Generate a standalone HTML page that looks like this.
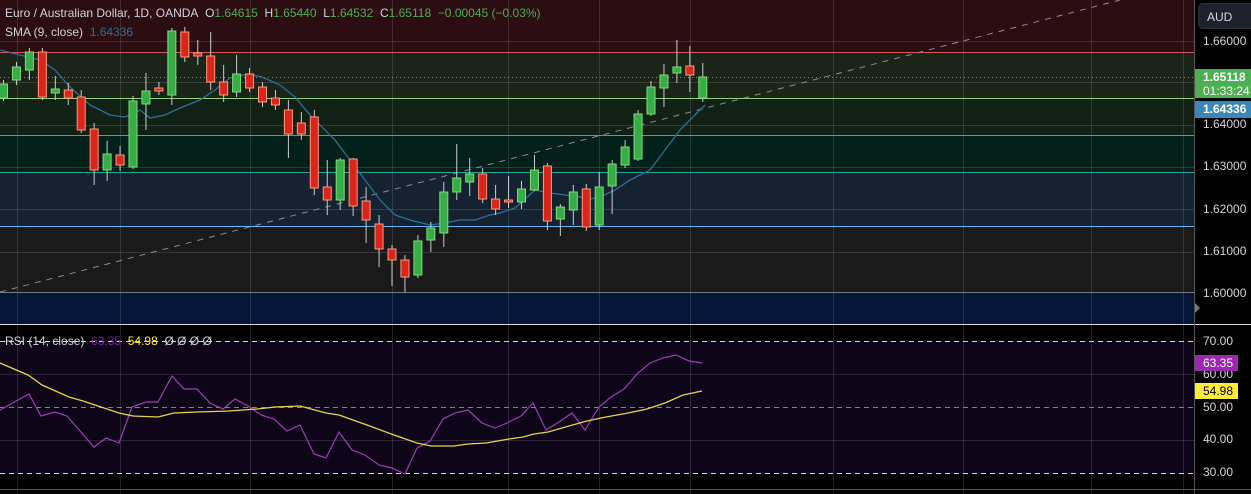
<!DOCTYPE html>
<html><head><meta charset="utf-8">
<style>
html,body{margin:0;padding:0;background:#000;}
body{width:1251px;height:494px;overflow:hidden;position:relative;font-family:"Liberation Sans",sans-serif;}
svg{position:absolute;left:0;top:0;}
.t{position:absolute;font-size:12px;color:#d1d4dc;white-space:nowrap;}
.ax{position:absolute;left:1203px;font-size:12px;color:#d1d4dc;}
.tag{position:absolute;left:1195px;width:56px;font-size:12px;font-weight:bold;padding-left:8px;box-sizing:border-box;}
</style></head><body>
<svg id="s" width="1251" height="494" xmlns="http://www.w3.org/2000/svg">
<rect x="0" y="0" width="1194" height="52" fill="#2c0e12"/>
<rect x="0" y="52" width="1194" height="46" fill="#1b2419"/>
<rect x="0" y="98" width="1194" height="37" fill="#122116"/>
<rect x="0" y="135" width="1194" height="37" fill="#03201a"/>
<rect x="0" y="172" width="1194" height="54" fill="#152331"/>
<rect x="0" y="226" width="1194" height="66" fill="#1a1a1a"/>
<rect x="0" y="292" width="1194" height="32" fill="#061638"/>
<rect x="0" y="341" width="1194" height="132" fill="#0f0519"/>
<g stroke="#ffffff" stroke-opacity="0.13" stroke-width="1">
<line x1="0" y1="41.5" x2="1194" y2="41.5"/><line x1="0" y1="82.5" x2="1194" y2="82.5"/>
<line x1="0" y1="125.5" x2="1194" y2="125.5"/><line x1="0" y1="167.5" x2="1194" y2="167.5"/>
<line x1="0" y1="209.5" x2="1194" y2="209.5"/><line x1="0" y1="252.5" x2="1194" y2="252.5"/>
<line x1="0" y1="374.5" x2="1194" y2="374.5"/><line x1="0" y1="440.5" x2="1194" y2="440.5"/>
<line x1="17.5" y1="0" x2="17.5" y2="494"/><line x1="120.5" y1="0" x2="120.5" y2="494"/>
<line x1="250.5" y1="0" x2="250.5" y2="494"/><line x1="392.5" y1="0" x2="392.5" y2="494"/>
<line x1="508.5" y1="0" x2="508.5" y2="494"/><line x1="599.5" y1="0" x2="599.5" y2="494"/>
<line x1="690.5" y1="0" x2="690.5" y2="494"/><line x1="833.5" y1="0" x2="833.5" y2="494"/>
<line x1="963.5" y1="0" x2="963.5" y2="494"/><line x1="1091.5" y1="0" x2="1091.5" y2="494"/>
<line x1="1183.5" y1="0" x2="1183.5" y2="494"/>
</g>
<line x1="0" y1="52.5" x2="1194" y2="52.5" stroke="#d25a5f"/>
<line x1="0" y1="98.5" x2="1194" y2="98.5" stroke="#8fd47a"/>
<line x1="0" y1="135.5" x2="1194" y2="135.5" stroke="#4caf50"/>
<line x1="0" y1="172.5" x2="1194" y2="172.5" stroke="#26a69a"/>
<line x1="0" y1="226.5" x2="1194" y2="226.5" stroke="#64b5f6"/>
<line x1="0" y1="292.5" x2="1194" y2="292.5" stroke="#787b86"/>
<line x1="0" y1="77.5" x2="1194" y2="77.5" stroke="#4caf50" stroke-dasharray="1 3"/>
<line x1="0" y1="292" x2="1120" y2="0" stroke="#8a8d96" stroke-dasharray="6 6"/>
<line x1="0" y1="324.5" x2="1251" y2="324.5" stroke="#d8d8d8"/>
<line x1="0" y1="341.5" x2="1194" y2="341.5" stroke="#d8d8d8" stroke-dasharray="5 4"/>
<line x1="0" y1="407.5" x2="1194" y2="407.5" stroke="#8a7a95" stroke-dasharray="5 4"/>
<line x1="0" y1="473.5" x2="1194" y2="473.5" stroke="#d8d8d8" stroke-dasharray="5 4"/>
<line x1="0" y1="489.5" x2="1251" y2="489.5" stroke="#555"/>
<line x1="1194.5" y1="0" x2="1194.5" y2="494" stroke="#555"/>
<polyline fill="none" stroke="#2e6f96" stroke-width="1.3" points="0,50 20,55 40,60 55,70 70,87 90,105 110,115 125,117 140,110 150,118 165,115 180,108 200,100 215,90 230,78 248,74 262,77 280,85 295,97 310,115 320,125 335,140 350,160 365,180 380,200 395,215 410,220 430,225 445,223 460,220 475,220 490,215 500,213 515,208 535,190 550,193 565,195 580,197 590,199 600,197 615,190 630,180 650,170 665,150 680,130 695,115 705,105"/>
<polyline fill="none" stroke="#9c3fb5" stroke-width="1.2" points="0,410 29,394 41,416 55,412 67,416 94,447 106,438 119,443 132,407 146,402 158,402 172,376 184,389 197,389 210,403 223,409 235,399 248,406 261,415 274,419 287,431 300,425 314,454 326,458 339,432 352,450 365,455 379,465 392,468 405,474 417,448 430,441 443,419 455,413 468,410 482,423 495,428 507,423 521,416 533,403 546,430 559,422 572,413 585,430 599,407 611,397 624,389 638,373 650,363 663,358 676,355 689,361 702,363"/>
<polyline fill="none" stroke="#e8d44a" stroke-width="1.3" points="0,363 28,375 42,385 69,397 83,401 119,413 133,416 158,417 174,413 197,412 229,411 257,409 275,407 300,406 326,413 339,415 367,425 394,435 417,443 431,446 454,446 468,444 486,443 509,439 523,437 534,434 548,432 569,426 587,421 606,417 628,413 647,409 665,403 683,395 702,391"/>
<g id="c"></g>
<rect x="1198.5" y="3.5" width="60" height="25" rx="4" fill="#1e222d" stroke="#2a2e39"/>
<path d="M1195 303 l5 5 l-5 5z" fill="#777"/>
</svg>
<script>
var d=[["g",84,98,80,101],["g",67,80,62,85],["g",52,70,48,80],["r",52,97,48,100],["g",89,93,76,100],["r",90,98,83,105],["r",97,130,90,133],["r",129,170,123,185],["g",154,170,141,181],["r",155,165,146,171],["g",101,167,96,169],["g",91,104,73,130],["r",88,91,82,95],["g",31,95,28,105],["r",32,57,27,62],["r",53,56,40,65],["r",56,82,32,90],["r",82,95,65,102],["g",74,92,55,97],["r",74,88,68,92],["r",87,102,82,107],["r",98,105,90,110],["r",110,134,100,158],["r",123,134,112,140],["r",117,188,110,195],["r",187,200,160,215],["g",160,200,158,210],["r",159,206,158,216],["r",201,220,187,243],["r",224,249,215,267],["r",249,260,245,286],["r",260,277,255,292],["g",241,275,235,278],["g",228,240,222,252],["g",192,233,182,247],["g",178,192,144,200],["g",174,182,158,196],["r",174,199,168,203],["r",199,209,185,215],["r",200,202,176,208],["g",189,202,181,209],["g",170,190,155,191],["r",166,221,163,230],["g",207,219,204,236],["g",192,210,185,225],["r",189,227,184,231],["g",187,225,172,230],["g",164,186,160,214],["g",147,165,140,168],["g",114,159,110,161],["g",87,114,81,116],["g",75,88,64,107],["g",67,73,40,83],["r",66,75,46,92],["g",77,98,63,102]];
var h="";
for(var i=0;i<d.length;i++){var c=d[i],x=3.5+12.95*i;
h+='<line x1="'+x+'" y1="'+c[3]+'" x2="'+x+'" y2="'+c[4]+'" stroke="#c9ccd4" stroke-width="1"/>';
var f=c[0]=="g"?"#36ad47":"#d8261c",s=c[0]=="g"?"#7fdc7a":"#ff9a7a";
h+='<rect x="'+(x-4)+'" y="'+c[1]+'" width="8" height="'+Math.max(2,c[2]-c[1])+'" fill="'+f+'" stroke="'+s+'" stroke-width="1"/>';}
document.getElementById("c").innerHTML=h;
</script>
<div class="t" style="left:5px;top:6px;">Euro / Australian Dollar, 1D, OANDA&nbsp; O<span style="color:#4caf50">1.64615</span>&nbsp; H<span style="color:#4caf50">1.65440</span>&nbsp; L<span style="color:#4caf50">1.64532</span>&nbsp; C<span style="color:#4caf50">1.65118</span>&nbsp; <span style="color:#4caf50">−0.00045 (−0.03%)</span></div>
<div class="t" style="left:5px;top:25px;">SMA (9, close)&nbsp; <span style="color:#2e6f96">1.64336</span></div>
<div class="t" style="left:5px;top:334px;">RSI (14, close)&nbsp; <span style="color:#7b1fa2">63.35</span>&nbsp; <span style="color:#ffeb3b">54.98</span>&nbsp; <span>Ø Ø Ø Ø</span></div>
<div class="ax" style="left:1207px;top:10px;">AUD</div>
<div class="ax" style="top:34px;">1.66000</div>
<div class="ax" style="top:117px;">1.64000</div>
<div class="ax" style="top:159px;">1.63000</div>
<div class="ax" style="top:202px;">1.62000</div>
<div class="ax" style="top:244px;">1.61000</div>
<div class="ax" style="top:286px;">1.60000</div>
<div class="ax" style="top:334px;">70.00</div>
<div class="ax" style="top:367px;">60.00</div>
<div class="ax" style="top:400px;">50.00</div>
<div class="ax" style="top:432px;">40.00</div>
<div class="ax" style="top:465px;">30.00</div>
<div class="tag" style="top:69px;height:29px;background:#4caf50;color:#fff;line-height:14px;padding-top:1px;">1.65118<br><span style="font-weight:normal">01:33:24</span></div>
<div class="tag" style="top:101px;height:17px;background:#3d86b8;color:#fff;line-height:17px;">1.64336</div>
<div class="tag" style="top:355px;width:43px;height:16px;background:#9c27b0;color:#fff;line-height:16px;font-weight:normal;">63.35</div>
<div class="tag" style="top:383px;width:43px;height:16px;background:#ffeb3b;color:#000;line-height:16px;font-weight:normal;">54.98</div>
</body></html>
